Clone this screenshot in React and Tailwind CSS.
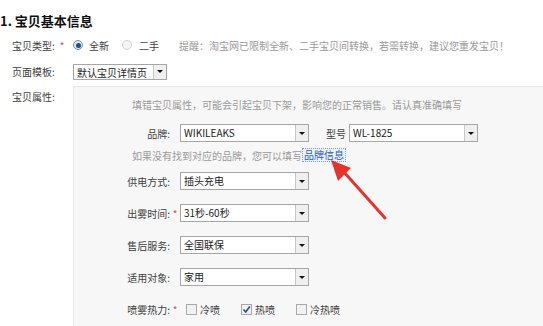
const cjk = { fontFamily: '"Noto Sans CJK SC", "Noto Sans", sans-serif' };

function Star() {
  return <span className="text-[#e8424f] text-[10px] leading-none">*</span>;
}

function Select({ value, width = "w-[129px]", height = "h-[18px]" }) {
  return (
    <div className={`flex ${width} ${height} border border-[#a7a7a7] bg-white`}>
      <span className="flex-1 overflow-hidden whitespace-nowrap pl-[3px] text-[10px] leading-[15px] text-[#222]">{value}</span>
      <span className="flex w-[13px] items-center justify-center border-l border-[#c8c8c8] bg-[#efefef]">
        <span className="block h-0 w-0 border-x-[3px] border-t-[3px] border-x-transparent border-t-[#111]" />
      </span>
    </div>
  );
}

function Radio({ checked }) {
  return (
    <span
      className={`flex h-[10px] w-[10px] items-center justify-center rounded-full border ${
        checked ? "border-[#7a8ea8] bg-[#dfe7f1]" : "border-[#d3d3d3] bg-[#f4f4f4]"
      }`}
    >
      {checked && <span className="h-[5px] w-[5px] rounded-full bg-[#1d4f8f]" />}
    </span>
  );
}

function Checkbox({ checked }) {
  return (
    <span className="flex h-[11px] w-[11px] items-center justify-center border border-[#a9a9a9] bg-[#f1f1f1]">
      {checked && (
        <svg width="9" height="9" viewBox="0 0 9 9">
          <path d="M1.5 4.5 L3.7 7 L7.8 1.5" fill="none" stroke="#2b4f86" strokeWidth="1.6" />
        </svg>
      )}
    </span>
  );
}

function AttrRow({ label, star, children, className = "mt-[14px]" }) {
  return (
    <div className={`flex h-[18px] items-center ${className}`}>
      <span className="w-[96px] text-right text-[#404040]">{label}</span>
      <span className="w-[10px] text-center">{star && <Star />}</span>
      {children}
    </div>
  );
}

export default function App() {
  return (
    <div className="relative h-[326px] w-[543px] overflow-hidden bg-white text-[10px] text-[#404040]" style={cjk}>
      <div className="h-[33px] pt-[12px] text-[13px] font-bold leading-[18px] text-[#111]">1. 宝贝基本信息</div>

      {/* 宝贝类型 */}
      <div className="flex h-[24px] items-center pl-[12px]">
        <div className="flex w-[61px] items-center">
          <span>宝贝类型:</span>
          <span className="ml-[5px]"><Star /></span>
        </div>
        <Radio checked />
        <span className="ml-[6px]">全新</span>
        <span className="ml-[13px]"><Radio /></span>
        <span className="ml-[7px]">二手</span>
        <span className="ml-[20px] text-[#9a9a9a]">提醒：淘宝网已限制全新、二手宝贝间转换，若需转换，建议您重发宝贝！</span>
      </div>

      {/* 页面模板 */}
      <div className="flex h-[29px] items-center pl-[12px]">
        <span className="w-[61px]">页面模板:</span>
        <Select value="默认宝贝详情页" width="w-[94px]" height="h-[16px]" />
      </div>

      {/* 宝贝属性 */}
      <div className="flex pl-[12px]">
        <span className="mt-[2px] w-[61px] leading-[18px]">宝贝属性:</span>
        <div className="h-[260px] flex-1 border-l border-t border-[#e9e9e9] bg-[#f7f7f7]">
          <div className="pl-[58px] pt-[9px] leading-[18px] text-[#9a9a9a]">
            填错宝贝属性，可能会引起宝贝下架，影响您的正常销售。请认真准确填写
          </div>

          <AttrRow label="品牌:" className="mt-[10px]">
            <Select value="WIKILEAKS" />
            <span className="ml-[17px] text-[#404040]">型号</span>
            <span className="ml-[3px]"><Select value="WL-1825" /></span>
          </AttrRow>

          <div className="mt-[4px] flex h-[18px] items-center pl-[58px] text-[#9a9a9a]">
            如果没有找到对应的品牌，您可以填写
            <span className="border border-dotted border-[#7f9fd0] bg-[#eef3fb] px-[1px] leading-[12px] text-[#2b5cb8]">品牌信息</span>
          </div>

          <AttrRow label="供电方式:" className="mt-[8px]">
            <Select value="插头充电" />
          </AttrRow>
          <AttrRow label="出雾时间:" star>
            <Select value="31秒-60秒" />
          </AttrRow>
          <AttrRow label="售后服务:">
            <Select value="全国联保" />
          </AttrRow>
          <AttrRow label="适用对象:">
            <Select value="家用" />
          </AttrRow>
          <AttrRow label="喷雾热力:" star>
            <span className="ml-[6px] flex items-center">
              <Checkbox />
              <span className="ml-[3px]">冷喷</span>
            </span>
            <span className="ml-[21px] flex items-center">
              <Checkbox checked />
              <span className="ml-[3px]">热喷</span>
            </span>
            <span className="ml-[21px] flex items-center">
              <Checkbox />
              <span className="ml-[3px]">冷热喷</span>
            </span>
          </AttrRow>
        </div>
      </div>

      {/* red annotation arrow */}
      <svg className="absolute left-0 top-0" width="543" height="326" viewBox="0 0 543 326">
        <path d="M385 218 L343 171" stroke="#e5332e" strokeWidth="3" strokeLinecap="round" fill="none" />
        <polygon points="331,160 351,168 338,181" fill="#e5332e" />
      </svg>
    </div>
  );
}
